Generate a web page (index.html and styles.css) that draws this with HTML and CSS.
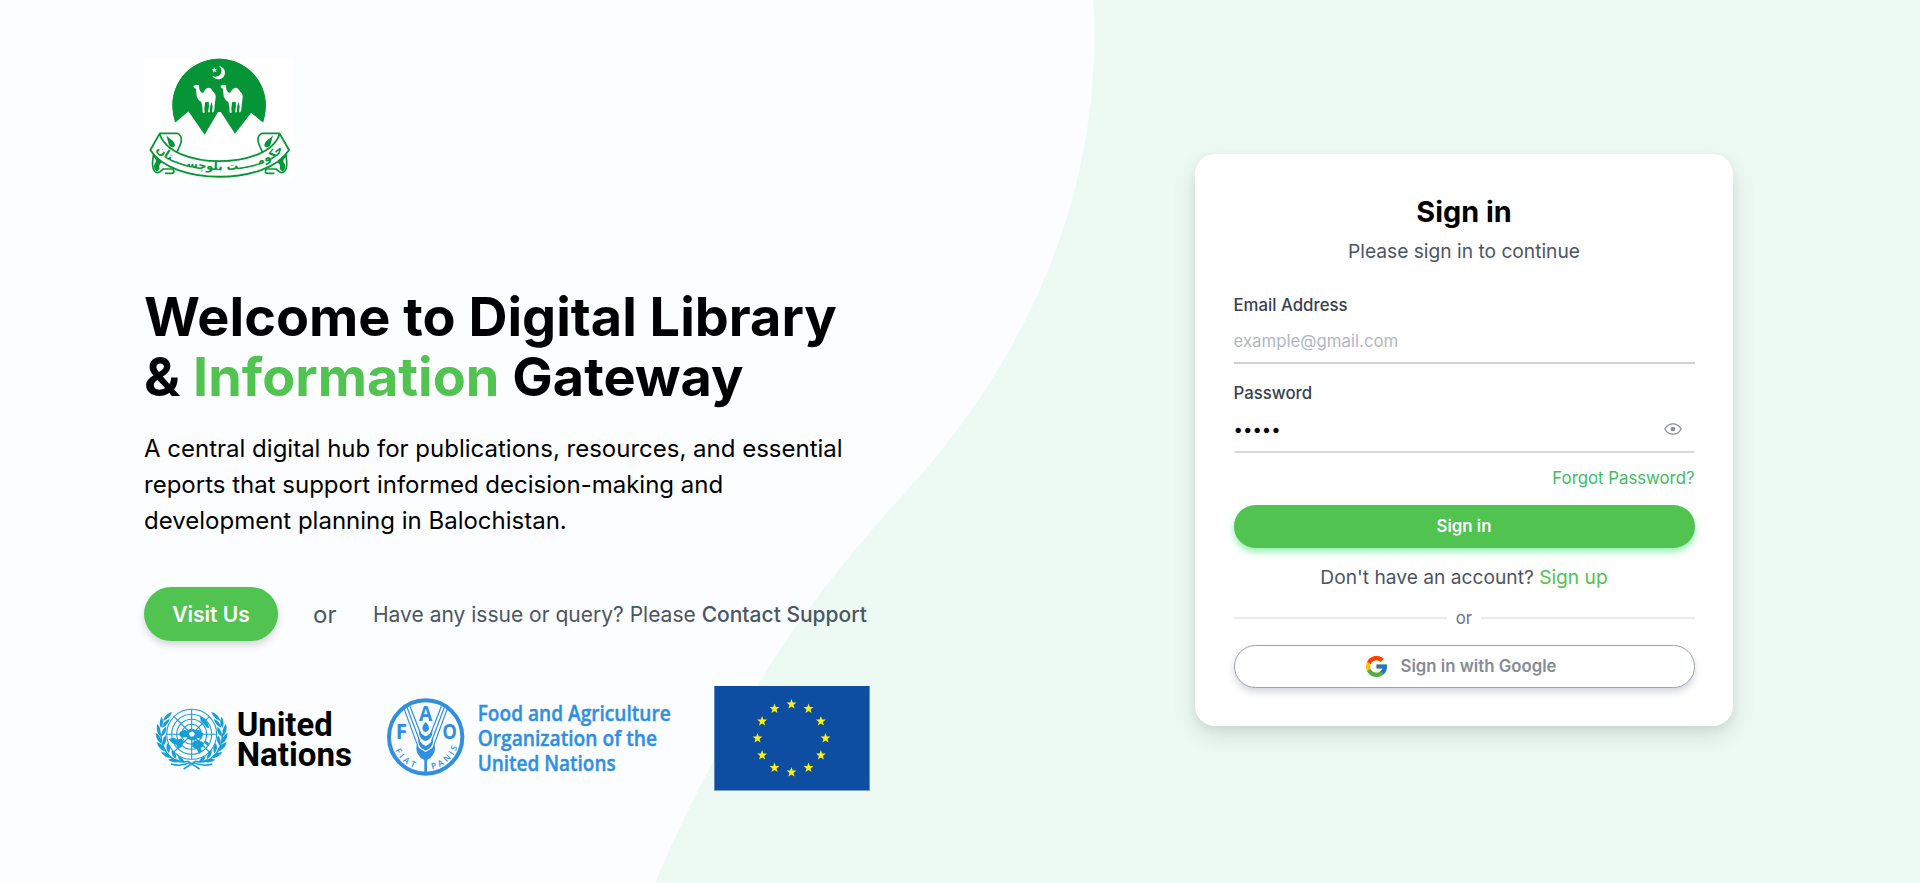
FILE: index.html
```html
<!DOCTYPE html>
<html lang="en">
<head>
<meta charset="utf-8">
<title>Digital Library &amp; Information Gateway</title>
<link rel="stylesheet" href="styles.css">
</head>
<body>
<div class="page">
  <svg class="backdrop" viewBox="0 0 1920 883" preserveAspectRatio="none" aria-hidden="true">
    <path fill="#fcfdff" d="M0 0H1093C1103 150 1055 330 903 495C825 580 735 695 655 883H0Z"/>
  </svg>

  <main class="intro">
    <svg class="crest" viewBox="43 40 450 363" role="img" aria-label="Government of Balochistan">
      <rect x="43" y="40" width="450" height="363" fill="#fff"/>
      <path fill="#069536" d="M138 233A140 140 0 1 1 399 233L365 204L316 267L269 195L225 270L176 200Z"/>
      <path fill="#069536" d="M128 182A140 140 0 0 1 408 182Q408 210 401 233L365 204L176 200L136 233Q128 210 128 182Z"/>
      <path fill="#fff" d="M268 64A20 20 0 1 1 248 93A16 16 0 1 0 268 64ZM254 68l2 5 6-1-4 5 3 5-6-2-4 4v-6l-5-3 6-2z"/>
      <g id="camel" fill="#fff">
        <path d="M191 124l8-4 9 2 1 12 5 9 6 2c5-9 10-16 17-16 8 0 12 11 18 17 5 7 3 13 2 20l-2 15-1 14-3 8h-4l2-17-3-15-4 12-2 20h-5l3-18-1-14-11 2-2 18 1 14-6-1-1-18-3-14c-7-3-11-9-14-17l-2-23-5-2z"/>
      </g>
      <use href="#camel" x="81"/>
      <g id="scroll">
        <path d="M90 266H142C158 272 158 290 150 304C143 318 140 330 132 340" fill="none" stroke="#069536" stroke-width="5"/>
        <path d="M110 272C118 284 134 286 136 302C134 310 124 309 118 302Z" fill="#069536"/>
        <path d="M72 326C68 352 66 369 75 380C84 391 94 378 101 373H130C135 380 133 386 127 386H106" fill="none" stroke="#069536" stroke-width="5"/>
        <path d="M70 328L106 350C92 352 86 362 90 372L82 381C74 376 70 366 76 356C82 350 78 340 70 338Z" fill="#069536"/>
      </g>
      <use href="#scroll" transform="matrix(-1 0 0 1 540 0)"/>
      <path d="M90 267C123 377 417 377 450 267L478 316C412 423 128 423 62 316Z" fill="#fff" stroke="#069536" stroke-width="5.500" stroke-linejoin="round"/>
      <path id="motto" d="M79 315C140 397 400 397 461 315" fill="none"/>
      <text class="motto" direction="rtl"><textPath href="#motto" startOffset="50%" text-anchor="middle">حكومـــــت بلوچســــتان</textPath></text>
    </svg>

    <h1 class="headline">Welcome to Digital Library<br>&amp; <span>Information</span> Gateway</h1>
    <p class="lead">A central digital hub for publications, resources, and essential<br>reports that support informed decision-making and<br>development planning in Balochistan.</p>

    <div class="actions">
      <a class="visit">Visit Us</a>
      <span class="alt">or</span>
      <p class="support">Have any issue or query? Please <b>Contact Support</b></p>
    </div>

    <div class="partners">
      <svg class="un" viewBox="0 0 690 360" role="img" aria-label="United Nations">
        <g fill="none" stroke="#169ed9" stroke-width="3.2">
          <circle cx="155" cy="163" r="75"/><circle cx="155" cy="163" r="60"/><circle cx="155" cy="163" r="45"/><circle cx="155" cy="163" r="30"/><circle cx="155" cy="163" r="15"/>
          <path d="M155 88V238M80 163H230M102 110L208 216M208 110L102 216"/>
        </g>
        <g fill="#169ed9">
          <path d="M120 155l15-6 8 5 11-8 12 4 14 1 10 10-5 15-13-3-8 9-14-3-10-8-15 2-8-9zM85 177l17-4 10 6 12-4 8 10-7 15-10 7-6-13-12-4zM157 186l15-6 16 6 4 12-10 6 4 10-9 8-6-14-14-7zM180 109l15 9 8 12 5 14-8-1-9-12-9-8z"/>
          <path d="M195 181l12 9-5 8-8-8z"/>
        </g>
        <path fill="#fcfdff" d="M148 158l9-4 8 7-4 8-8 1-6-5z"/>
        <g id="laurel" fill="#169ed9">
          <path d="M96 96c-14 3-24 14-27 27 13-5 23-14 27-27zM65 110c-7 13-8 23-2 34 8-12 8-22 2-34zM89 116c-12 5-21 14-23 27 13-5 20-14 23-27zM52 132c-4 15-1 26 8 36 5-14 1-26-8-36zM78 140c-10 7-15 17-14 30 12-8 16-18 14-30zM47 158c0 15 6 26 17 33 1-15-5-26-17-33zM76 166c-8 9-10 19-5 31 9-11 10-21 5-31zM50 187c4 15 13 24 27 28-3-15-12-24-27-28zM82 190c-5 11-4 21 5 30 5-12 4-22-5-30zM63 216c8 13 20 19 34 18-8-12-19-18-34-18zM95 210c-2 12 3 21 14 27 1-12-4-21-14-27zM84 239c13 9 26 11 38 4-12-7-25-9-38-4zM113 229c2 11 10 17 21 19-3-11-10-17-21-19z"/>
          <path fill="none" stroke="#169ed9" stroke-width="4.500" d="M62 160C64 224 108 254 144 244L179 267M93 252C116 259 133 256 151 247"/>
        </g>
        <use href="#laurel" transform="matrix(-1 0 0 1 310 0)"/>
        <g class="un-name">
          <text x="290" y="169" textLength="288" lengthAdjust="spacingAndGlyphs">United</text>
          <text x="290" y="259" textLength="346" lengthAdjust="spacingAndGlyphs">Nations</text>
        </g>
      </svg>

      <svg class="fao" viewBox="45 0 915 360" role="img" aria-label="Food and Agriculture Organization of the United Nations">
        <circle cx="167" cy="171" r="110" fill="none" stroke="#318fe1" stroke-width="12"/>
        <g fill="none" stroke="#318fe1" stroke-width="3.6">
          <path d="M102 86L145 203M111 82L149 183M120 79L153 164M232 86L189 203M223 82L185 183M214 79L181 164"/>
          <path d="M167 230V276" stroke-width="8"/>
        </g>
        <g fill="#318fe1">
          <path d="M167 126c14 13 12 28 0 30-12-2-14-17 0-30zM148 147c2 12 8 17 19 22 11-5 17-10 19-22 4 19-3 30-19 36-16-6-23-17-19-36zM146 174c3 12 9 18 21 24 12-6 18-12 21-24 4 19-4 30-21 38-17-8-25-19-21-38zM140 196c5 9 14 12 27 20 13-8 22-11 27-20 4 20-6 29-12 38l-11 6h-8l-11-6c-6-9-16-18-12-38z"/>
        </g>
        <g class="fao-mark">
          <text x="167" y="124" font-size="62" text-anchor="middle" textLength="40" lengthAdjust="spacingAndGlyphs">A</text>
          <text x="94" y="176" font-size="64" text-anchor="middle" textLength="34" lengthAdjust="spacingAndGlyphs">F</text>
          <text x="239" y="177" font-size="62" text-anchor="middle" textLength="44" lengthAdjust="spacingAndGlyphs">O</text>
          <path id="fiat" d="M72 203A99 99 0 0 0 157 269" fill="none"/>
          <path id="panis" d="M182 268A99 99 0 0 0 265 190" fill="none"/>
          <text class="fao-arc"><textPath href="#fiat" startOffset="8" textLength="80">FIAT</textPath></text>
          <text class="fao-arc"><textPath href="#panis" startOffset="4" textLength="106">PANIS</textPath></text>
        </g>
        <g class="fao-name">
          <text x="323" y="122" textLength="579" lengthAdjust="spacingAndGlyphs">Food and Agriculture</text>
          <text x="323" y="197" textLength="538" lengthAdjust="spacingAndGlyphs">Organization of the</text>
          <text x="323" y="272" textLength="414" lengthAdjust="spacingAndGlyphs">United Nations</text>
        </g>
      </svg>

      <svg class="eu" viewBox="0 0 156 105" role="img" aria-label="European Union">
        <defs><path id="star" fill="#fff10a" d="M0-5.2L1.25-1.7H4.95L2 .65 3.1 4.2 0 2.1-3.1 4.2-2 .65-4.95-1.7H-1.25Z"/></defs>
        <rect width="156" height="105" fill="#7fa3cf"/>
        <rect x=".7" width="154.5" height="104" fill="#0d4ea2"/>
        <use href="#star" x="77.5" y="18.3"/><use href="#star" x="94.5" y="22.8"/><use href="#star" x="106.9" y="35.3"/><use href="#star" x="111.5" y="52.3"/><use href="#star" x="106.9" y="69.3"/><use href="#star" x="94.5" y="81.8"/><use href="#star" x="77.5" y="86.3"/><use href="#star" x="60.5" y="81.8"/><use href="#star" x="48.1" y="69.3"/><use href="#star" x="43.5" y="52.3"/><use href="#star" x="48.1" y="35.3"/><use href="#star" x="60.5" y="22.8"/>
      </svg>
    </div>
  </main>

  <section class="auth">
    <form class="card">
      <h2 class="title">Sign in</h2>
      <p class="subtitle">Please sign in to continue</p>
      <label class="label" for="email">Email Address</label>
      <input class="input" id="email" type="email" placeholder="example@gmail.com">
      <label class="label label-pw" for="password">Password</label>
      <div class="pw">
        <input class="input-pw" id="password" type="password" value="admin">
        <svg class="eye" viewBox="0 0 18 12" aria-hidden="true"><path d="M.8 6C2.7 2.6 5.6.8 9 .8S15.3 2.6 17.2 6C15.3 9.4 12.4 11.2 9 11.2S2.7 9.4.8 6Z" fill="none" stroke="#858c99" stroke-width="1.2"/><circle cx="9" cy="6" r="2.3" fill="#858c99"/></svg>
      </div>
      <a class="forgot">Forgot Password?</a>
      <button class="submit" type="button">Sign in</button>
      <p class="signup">Don't have an account? <a>Sign up</a></p>
      <div class="divider"><span>or</span></div>
      <button class="google" type="button">
        <svg class="g-icon" viewBox="4 4 40 40" aria-hidden="true"><path fill="#FFC107" d="M43.6 20.1H42V20H24v8h11.3c-1.6 4.7-6.1 8-11.3 8-6.600 0-12-5.400-12-12s5.400-12 12-12c3.100 0 5.800 1.200 8 3l5.700-5.700C34 6.100 29.300 4 24 4 13 4 4 13 4 24s9 20 20 20 20-9 20-20c0-1.300-.1-2.600-.4-3.900z"/><path fill="#FF3D00" d="M6.300 14.700l6.600 4.800C14.700 15.100 19 12 24 12c3.100 0 5.800 1.200 8 3l5.700-5.700C34 6.100 29.300 4 24 4 16.300 4 9.700 8.300 6.300 14.700z"/><path fill="#4CAF50" d="M24 44c5.200 0 9.900-2 13.400-5.200l-6.200-5.200C29.200 35.100 26.700 36 24 36c-5.200 0-9.600-3.300-11.300-7.900l-6.500 5C9.500 39.600 16.200 44 24 44z"/><path fill="#1976D2" d="M43.600 20.100H42V20H24v8h11.300c-.8 2.200-2.200 4.200-4.100 5.600l6.200 5.200C37 39.200 44 34 44 24c0-1.300-.1-2.600-.4-3.900z"/></svg>
        <span>Sign in with Google</span>
      </button>
    </form>
  </section>
</div>
</body>
</html>
```
FILE: styles.css
```css
* { box-sizing: border-box; margin: 0; padding: 0; }
body { font-family: Inter, sans-serif; color: #000; overflow: hidden; }
.page { position: relative; display: grid; grid-template-columns: 1008px 912px; height: 883px; background: #ecfaf3; overflow: hidden; }
.backdrop { position: absolute; inset: 0; width: 100%; height: 100%; }
.intro { position: relative; padding: 58px 0 0 144px; display: flex; flex-direction: column; }
.crest { width: 150px; height: 121px; display: block; }
.motto { font: bold 35px "DejaVu Sans", sans-serif; fill: #069536; }
.headline { margin-top: 108px; font-size: 54px; line-height: 60px; font-weight: 700; white-space: nowrap; }
.headline span { color: #50c350; }
.lead { margin-top: 24px; font-size: 24px; line-height: 36px; white-space: nowrap; }
.actions { margin-top: 48px; display: flex; align-items: center; height: 54px; white-space: nowrap; color: #4b5563; }
.visit { width: 134px; height: 54px; line-height: 56px; border-radius: 27px; background: #50c350; color: #fff; font-size: 21px; font-weight: 600; text-align: center; box-shadow: 0 4px 7px rgba(0,0,0,.16); }
.alt { margin-left: 35px; width: 60px; font-size: 24px; }
.support { font-size: 21px; }
.support b { font-weight: 500; }
.partners { margin-top: 39px; display: flex; align-items: flex-start; height: 120px; }
.un { width: 230px; height: 120px; margin: 0 15px 0 -4px; }
.fao { width: 305px; height: 120px; }
.eu { width: 156px; height: 105px; margin: 6px 0 0 24px; }
.un-name { font: 700 101px Roboto, sans-serif; }
.fao-name { font: 600 63px "Open Sans", sans-serif; fill: #318fe1; stroke: #318fe1; stroke-width: 1.2px; }
.fao-mark { font-family: "Open Sans", sans-serif; font-weight: 700; fill: #318fe1; }
.fao-arc { font-size: 25px; font-weight: 600; }

.auth { position: relative; display: flex; align-items: center; justify-content: center; padding-bottom: 3px; }
.card { width: 538px; height: 572px; padding: 38px 38.5px 0; border-radius: 20px; background: #fff; box-shadow: 0 10px 25px rgba(0,0,0,.11), 0 4px 10px rgba(0,0,0,.05); display: flex; flex-direction: column; }
.title { font-size: 28.8px; line-height: 40px; font-weight: 700; text-align: center; }
.subtitle { margin-top: 5px; font-size: 19.2px; line-height: 28px; text-align: center; color: #4b5563; }
.label { margin-top: 28px; font-size: 16.8px; line-height: 24px; font-weight: 500; color: #374151; }
.input { height: 47px; border: 0; border-bottom: 2px solid #d1d1d4; font: 16.8px Inter, sans-serif; outline: 0; padding-top: 2px; }
.input::placeholder { color: #b1b7c1; opacity: 1; }
.label-pw { margin-top: 17px; }
.pw { display: flex; align-items: center; justify-content: space-between; height: 48px; border-bottom: 2px solid #d9d9dc; border-radius: 2px; padding: 2px 13px 0 0; }
.input-pw { width: 300px; border: 0; outline: 0; font: 16.8px Inter, sans-serif; }
.eye { width: 18px; height: 12px; }
.forgot { margin-top: 13px; font-size: 16.8px; line-height: 24px; text-align: right; color: #3dbd64; }
.submit { margin-top: 15px; height: 43px; flex-shrink: 0; border: 0; border-radius: 22px; background: #50c350; color: #fff; font: 600 16.8px Inter, sans-serif; padding-bottom: 1px; box-shadow: 0 4px 7px rgba(60,225,115,.55); }
.signup { margin-top: 15px; font-size: 19.2px; line-height: 29px; text-align: center; color: #4b5563; }
.signup a { color: #50c350; }
.divider { margin-top: 14px; display: flex; align-items: center; gap: 9px; font-size: 16.8px; line-height: 24px; color: #6b7280; }
.divider::before, .divider::after { content: ""; flex: 1; height: 2px; background: #e9eaed; }
.google { margin-top: 15px; height: 43px; flex-shrink: 0; border: 1px solid #9ca3af; border-radius: 22px; background: #fff; color: #858c95; font: 600 16.8px Inter, sans-serif; display: flex; align-items: center; justify-content: center; gap: 14px; padding: 0 6px 1px 0; box-shadow: 0 4px 7px rgba(80,90,120,.25); }
.g-icon { width: 21px; height: 21px; }
```
